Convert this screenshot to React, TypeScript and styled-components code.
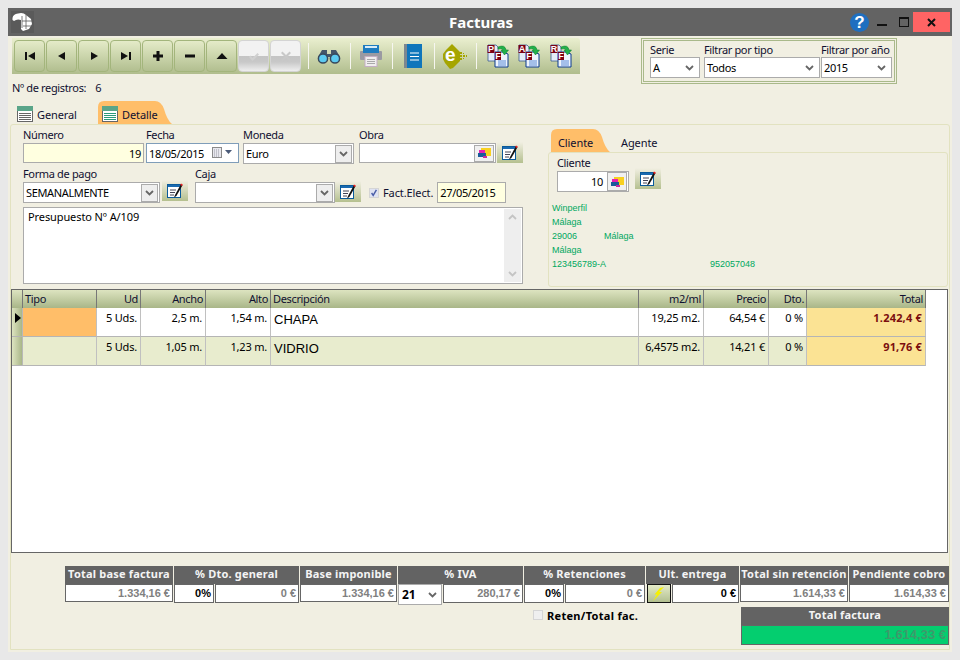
import React from "react";
import styled, { createGlobalStyle } from "styled-components";

const UI = `"Noto Sans", "Liberation Sans", sans-serif`;
const ARIAL = `"Liberation Sans", Arial, sans-serif`;

const Global = createGlobalStyle`
  html, body { margin: 0; padding: 0; background: #e8e8e8; }
  * { box-sizing: border-box; }
  body { font-family: ${UI}; font-size: 11px; color: #000; letter-spacing: -0.35px; }
`;

const Page = styled.div`
  width: 960px; height: 660px; padding: 8px; background: #e8e8e8;
`;
const Win = styled.div`
  width: 944px; height: 644px; background: #f1efe2; display: flex; flex-direction: column;
`;
const TitleBar = styled.div`
  height: 28px; flex: none; background: #636363; display: grid;
  grid-template-columns: 1fr auto 1fr; align-items: center; padding-left: 3px;
`;
const LogoBox = styled.div`
  width: 23px; height: 22px; background: #5a5a5a; display: flex; align-items: center; justify-content: center;
`;
const Title = styled.div`
  color: #fff; font: bold 15px ${UI}; letter-spacing: 0; margin-left: -1px;
`;
const Controls = styled.div`
  display: flex; align-items: center; justify-content: flex-end; height: 100%; padding-right: 2px;
`;
const Help = styled.div`
  width: 19px; height: 19px; border-radius: 50%; background: #1f6fc0; color: #fff; letter-spacing: 0;
  font: bold 17px/19px ${ARIAL}; text-align: center;
`;
const WinBtn = styled.div<{ $w: number; $bg?: string }>`
  width: ${(p) => p.$w}px; height: 20px; display: flex; align-items: center; justify-content: center;
  background: ${(p) => p.$bg || "transparent"};
`;
const Body = styled.div`
  flex: 1; min-height: 0; padding: 2px; display: flex; flex-direction: column;
`;
const TopRow = styled.div`
  height: 63px; flex: none; display: flex; align-items: flex-start; padding-left: 2px;
`;
const TopLeft = styled.div`
  width: 568px; display: flex; flex-direction: column;
`;
const Toolbar = styled.div`
  width: 568px; height: 36px; display: flex; align-items: center; padding-left: 2px;
  background: linear-gradient(#eaefcf, #b0bd8d); border-top-right-radius: 3px;
`;
const NavBtn = styled.div<{ $off?: boolean }>`
  width: 31px; height: 32px; margin-right: 1px; border: 1px solid ${(p) => (p.$off ? "#d4d4d4" : "#a3b57c")};
  border-radius: 4px; display: flex; align-items: center; justify-content: center;
  background: ${(p) =>
    p.$off
      ? "linear-gradient(#f2f2f2 50%, #c4c4c4 50%, #c8c8c8 70%, #eeeeee 100%)"
      : "linear-gradient(#e4ebc8, #b2bf90)"};
`;
const ToolCell = styled.div<{ $w: number; $first?: boolean; $sep?: boolean; $pl?: number }>`
  width: ${(p) => p.$w}px; height: 26px; display: flex; align-items: center; justify-content: center;
  margin-left: ${(p) => (p.$first ? "6px" : "0")};
  padding: 0 ${(p) => (p.$sep && !p.$pl ? "2px" : "0")} 0 ${(p) => p.$pl || 0}px;
  border-left: ${(p) => (p.$sep ? "1px solid #f6f6f0" : "0")};
`;
const Records = styled.div`
  margin-top: 6px; height: 16px; display: flex; line-height: 16px; color: #101030;
`;
const RecordsCount = styled.span`
  margin-left: 9px;
`;
const FilterBox = styled.div`
  margin-left: 61px; width: 256px; height: 46px; border: 3px double #a9b98a;
  padding: 3px 0 0 6px; display: flex;
`;
const Field = styled.div<{ $w?: number; $ml?: number }>`
  display: flex; flex-direction: column; flex: none;
  width: ${(p) => (p.$w ? `${p.$w}px` : "auto")};
  margin-left: ${(p) => p.$ml || 0}px;
`;
const Label = styled.div<{ $h?: number }>`
  height: ${(p) => p.$h || 14}px; line-height: 12px; color: #101030; white-space: nowrap;
`;
const Box = styled.div<{ $h?: number; $bg?: string; $blue?: boolean; $right?: boolean }>`
  height: ${(p) => p.$h || 21}px; background: ${(p) => p.$bg || "#fff"};
  border: 1px solid ${(p) => (p.$blue ? "#7f9db9" : "#ababab")};
  display: flex; align-items: center; justify-content: ${(p) => (p.$right ? "flex-end" : "space-between")};
  padding: ${(p) => (p.$right ? "0 2px 0 0" : "0 1px 0 2px")}; white-space: nowrap; color: #000;
`;
const DateBox = styled(Box)`
  width: 69px;
`;
const ClientBox = styled(Box)`
  padding-right: 1px;
`;
const ClientNumber = styled.span`
  margin-right: 4px;
`;
const SelectArrow = styled.div<{ $boxed?: boolean }>`
  width: 17px; height: 18px; flex: none; display: flex; align-items: center; justify-content: center;
  border: ${(p) => (p.$boxed ? "1px solid #ababab" : "0")}; background: ${(p) => (p.$boxed ? "#eeeeee" : "transparent")};
`;
const EditBtn = styled.div<{ $ml?: number; $mt?: number }>`
  width: 26px; height: 21px; flex: none; display: flex; align-items: center; justify-content: center;
  background: linear-gradient(#f1efe2, #b5c08f);
  margin-left: ${(p) => p.$ml || 0}px; margin-top: ${(p) => p.$mt || 0}px;
`;
const LookupBtn = styled.div<{ $h?: number }>`
  width: 20px; height: ${(p) => p.$h || 17}px; flex: none; background: #f0f0f0; border: 1px solid #ababab;
  display: flex; align-items: center; justify-content: center;
`;
const Tabs = styled.div<{ $h: number; $pl: number }>`
  height: ${(p) => p.$h}px; flex: none; display: flex; align-items: stretch; padding-left: ${(p) => p.$pl}px;
`;
const tabPath = (w: number, h: number) =>
  `path('M0 ${h} V6 Q0 0 6 0 H${w - 17} Q${w - 11} 0 ${w - 8} 8 Q${w - 5} ${h - 4} ${w} ${h} Z')`;
const Tab = styled.div<{ $w: number; $h: number; $on?: boolean; $pl: number; $gap?: number }>`
  width: ${(p) => p.$w}px; display: flex; align-items: center; gap: ${(p) => p.$gap || 4}px;
  padding-left: ${(p) => p.$pl}px; padding-top: 3px; color: #101030; letter-spacing: -0.1px;
  background: ${(p) => (p.$on ? "#ffbe69" : "transparent")};
  clip-path: ${(p) => (p.$on ? tabPath(p.$w, p.$h) : "none")};
`;
const Panel = styled.div`
  flex: 1; min-height: 0; border: 1px solid #e2e2c0; border-radius: 3px 3px 0 0; display: flex; flex-direction: column;
`;
const Upper = styled.div`
  height: 164px; flex: none; display: flex;
`;
const FormArea = styled.div`
  width: 512px; flex: none; padding: 4px 0 0 12px;
`;
const FormRow = styled.div<{ $mt?: number }>`
  display: flex; align-items: flex-start; margin-top: ${(p) => p.$mt || 0}px;
`;
const Check = styled.div<{ $on?: boolean }>`
  width: 10px; height: 10px; flex: none; border: 1px solid #d5d5d5;
  background: ${(p) => (p.$on ? "#dfe3f2" : "#efefef")}; display: flex; align-items: center; justify-content: center;
`;
const CheckRow = styled.div`
  display: flex; align-items: center; height: 21px; margin: 14px 0 0 8px;
`;
const CheckLabel = styled.span`
  margin: 0 4px 0 4px; color: #101030; white-space: nowrap; letter-spacing: -0.1px;
`;
const Memo = styled.div`
  margin-top: 4px; width: 500px; height: 77px; background: #fff; border: 1px solid #ababab;
  display: flex; justify-content: space-between; padding: 1px 1px 1px 4px; line-height: 15px; letter-spacing: -0.1px;
`;
const MemoText = styled.div`
  padding-top: 0;
`;
const Scroll = styled.div`
  width: 17px; background: #eeeeee; display: flex; flex-direction: column; justify-content: space-between;
  align-items: center; padding: 5px 0;
`;
const ClientArea = styled.div`
  margin-left: 25px; width: 400px; padding-top: 4px; display: flex; flex-direction: column;
`;
const ClientPanel = styled.div`
  height: 135px; border: 1px solid #e2e2c0; border-radius: 3px; padding: 4px 0 0 3px;
`;
const ClientTop = styled.div`
  padding-left: 5px; display: flex; align-items: flex-start;
`;
const ClientLines = styled.div`
  margin-top: 9px; font: 9px/14px ${ARIAL}; color: #00a860; letter-spacing: 0;
`;
const ClientLine = styled.div`
  display: flex; height: 14px;
`;
const ClientCell = styled.span<{ $w: number }>`
  width: ${(p) => p.$w}px; flex: none;
`;
const Frame = styled.div`
  margin-right: 1px; height: 264px; flex: none; background: #fff; border: 1px solid #666;
`;
const COLS = "11px 74px 44px 65px 65px 368px 65px 65px 38px 119px";
const HeadRow = styled.div`
  width: 914px; height: 18px; display: grid; grid-template-columns: ${COLS};
  border-bottom: 1px solid #666;
`;
const HeadCell = styled.div<{ $right?: boolean }>`
  background: linear-gradient(#dde4c0, #a9b688); border-right: 1px solid #777;
  text-align: ${(p) => (p.$right ? "right" : "left")}; padding: 0 ${(p) => (p.$right ? "2px" : "0")} 0 ${(p) => (p.$right ? "0" : "2px")};
  line-height: 18px; color: #101030; white-space: nowrap;
`;
const DataRow = styled.div<{ $alt?: boolean }>`
  width: 914px; height: 29px; display: grid; grid-template-columns: ${COLS};
  background: ${(p) => (p.$alt ? "#e8ecce" : "#fff")};
`;
const Indicator = styled.div`
  background: linear-gradient(90deg, #dde4c0, #a9b688); border-right: 1px solid #b8b8b8; border-bottom: 1px solid #b5b5b5;
  padding: 3px 0 0 3px;
`;
const Cell = styled.div<{ $bg?: string; $big?: boolean; $total?: boolean }>`
  background: ${(p) => p.$bg || "transparent"};
  border-right: 1px solid #c0c0c0; border-bottom: 1px solid #b5b5b5;
  text-align: ${(p) => (p.$big ? "left" : "right")};
  padding: ${(p) => (p.$big ? "3px 0 0 3px" : "2px 3px 0 0")};
  font: ${(p) => (p.$big ? `13px/18px ${ARIAL}` : p.$total ? `bold 11px/16px ${UI}` : `11px/16px ${UI}`)};
  letter-spacing: ${(p) => (p.$big ? "0" : p.$total ? "0.2px" : "-0.2px")};
  color: ${(p) => (p.$total ? "#7b0f0f" : "#000")}; white-space: nowrap;
`;
const Totals = styled.div`
  margin: 13px 0 0 54px; display: flex; gap: 1px; align-items: flex-start;
`;
const TotGroup = styled.div<{ $w: number }>`
  width: ${(p) => p.$w}px; flex: none; display: flex; flex-direction: column;
`;
const TotHead = styled.div`
  height: 18px; background: #636363; color: #f4f4f4; font: bold 11px/15px ${UI}; text-align: center; white-space: nowrap;
  letter-spacing: 0.2px;
`;
const TotVals = styled.div<{ $tight?: boolean }>`
  display: flex; gap: ${(p) => (p.$tight ? 0 : 1)}px;
`;
const TotVal = styled.div<{ $w?: number; $strong?: boolean }>`
  height: 19px; background: #fff; border: 1px solid #666; flex: ${(p) => (p.$w ? `0 0 ${p.$w}px` : "1")};
  font: bold 11px/16px ${ARIAL}; text-align: right; padding-right: 2px; letter-spacing: 0;
  color: ${(p) => (p.$strong ? "#000" : "#808080")}; white-space: nowrap;
`;
const IvaSelect = styled.div`
  flex: 0 0 44px; height: 21px; border: 1px solid #ababab; background: #fff; display: flex; align-items: center;
  justify-content: space-between; padding-left: 3px; font: bold 12px ${UI}; color: #000; margin-right: 1px; letter-spacing: 0;
`;
const FlashBtn = styled.div`
  flex: 0 0 24px; height: 19px; border: 1px solid #111; background: linear-gradient(#e4ebc8, #b2bf90);
  display: flex; align-items: center; justify-content: center; margin-left: 1px;
`;
const Lower = styled.div`
  margin-top: 2px; display: flex; align-items: flex-start; padding-left: 522px;
`;
const RetenRow = styled.div`
  display: flex; align-items: center; height: 16px; gap: 4px; width: 208px; flex: none;
  font: bold 11px ${UI}; color: #000; white-space: nowrap; letter-spacing: 0.3px;
`;
const GrandTotal = styled.div`
  width: 208px; flex: none; display: flex; flex-direction: column;
`;
const GrandHead = styled(TotHead)`
  height: 18px;
`;
const GrandVal = styled.div`
  height: 20px; background: #04ce6f; border: 1px solid #666; text-align: right; padding-right: 2px;
  font: bold 13px/18px ${ARIAL}; color: #3d9a6b; letter-spacing: 0;
`;

const Chevron = ({ c = "#666", up = false }: { c?: string; up?: boolean }) => (
  <svg width="9" height="6" viewBox="0 0 9 6">
    <path d={up ? "M1 5 L4.5 1.5 L8 5" : "M1 1 L4.5 4.5 L8 1"} fill="none" stroke={c} strokeWidth="1.8" />
  </svg>
);
const Nav = ({ d, fill = "#111" }: { d: string; fill?: string }) => (
  <svg width="12" height="12" viewBox="0 0 12 12"><path d={d} fill={fill} /></svg>
);
const Logo = () => (
  <svg width="21" height="20" viewBox="0 0 21 20">
    <path d="M0.5 6 Q1 2 6 1.500 Q11 0 14 3 L19 7 L20 12 L17 17 L11 19 L9 17 L9 8 Q5 6.500 2 9 L0.5 8 Z" fill="#fff" />
    <path d="M10 4 V16 M14 3 V17 M10 9 L20 9 M11 14 L19 14" stroke="#5a5a5a" strokeWidth=".8" />
  </svg>
);
const Binoculars = () => (
  <svg width="24" height="15" viewBox="0 0 24 15">
    <path d="M5 1 H10 V5 H14 V1 H19 L23 8 H1 Z" fill="#44556a" />
    <circle cx="6" cy="9.500" r="4.600" fill="#5ccaf0" stroke="#37485c" strokeWidth="1.500" />
    <circle cx="18" cy="9.500" r="4.600" fill="#5ccaf0" stroke="#37485c" strokeWidth="1.500" />
  </svg>
);
const Printer = () => (
  <svg width="22" height="22" viewBox="0 0 22 22">
    <rect x="0" y="6" width="22" height="9" rx="1" fill="#9a9aa2" />
    <path d="M3 0 H19 V8 H3 Z" fill="#1e7cc0" />
    <rect x="5" y="1" width="12" height="2" fill="#d8ecf8" />
    <rect x="5" y="11.500" width="12" height="10" fill="#f0eeee" stroke="#c4aec4" />
    <path d="M7 14.500 H15 M7 16.500 H15 M7 18.500 H15" stroke="#aaa" />
  </svg>
);
const Book = () => (
  <svg width="18" height="24" viewBox="0 0 18 24">
    <rect width="18" height="24" fill="#0f76bb" />
    <rect width="3" height="24" fill="#7c8790" />
    <path d="M6 9 H15 M6 12.500 H15 M6 16 H15" stroke="#fff" strokeWidth="1.200" />
  </svg>
);
const EIcon = () => (
  <svg width="24" height="25" viewBox="0 0 24 25">
    <path d="M9 0 L14 5 L17 8 V17 L10 24 L7 25 L2 19 L0 15 V10 L3 6 Z" fill="#a5a500" />
    <text x="7" y="17" textAnchor="middle" fontFamily={ARIAL} fontWeight="bold" fontSize="19" fill="#fff">e</text>
    <path d="M17 8h2v2h-2z M20 9h1v1h-1z M17 11h2v2h-2z M20 11h2v2h-2z M23 11h1v2h-1z M17 14h2v2h-2z M20 14h1v1h-1z" fill="#a5a500" />
  </svg>
);
const DocIcon = ({ letter }: { letter: string }) => (
  <svg width="22" height="24" viewBox="0 0 22 24">
    <path d="M1 1 H9 L11 3 V17 H1 Z" fill="#e4ecf8" stroke="#3a5a90" strokeWidth=".8" />
    <rect x="0.500" y="1" width="7" height="8" fill="#7b0014" />
    <text x="4" y="8" textAnchor="middle" fontFamily={ARIAL} fontWeight="bold" fontSize="9" fill="#fff" letterSpacing="0">{letter}</text>
    <path d="M8 8 H16 L21 10 V23 H8 Z" fill="#eef4fc" stroke="#0a3a90" strokeWidth="1" />
    <path d="M11 17 H19 M11 19 H19 M11 21 H19" stroke="#5a8ad8" />
    <rect x="8" y="8" width="6" height="8" fill="#7b0014" />
    <text x="11" y="15" textAnchor="middle" fontFamily={ARIAL} fontWeight="bold" fontSize="9" fill="#fff" letterSpacing="0">F</text>
    <path d="M11 3 Q18 0 19 6 L21.500 6 L17.500 11 L14 6 L16 6 Q15 4 11 5 Z" fill="#22b04a" stroke="#0d7a2a" strokeWidth=".5" />
  </svg>
);
const EditIcon = () => (
  <svg width="16" height="16" viewBox="0 0 16 16">
    <rect x="0.500" y="1.500" width="13" height="13" fill="#fff" stroke="#0a5a9a" />
    <rect x="1" y="2" width="12" height="2" fill="#1a6ab0" />
    <path d="M3 7 H9 M3 9.500 H8 M3 12 H7" stroke="#445" />
    <path d="M14 1 L8 12 L7 14.500 L9.400 13 L15.500 2.200 Z" fill="#111" />
    <path d="M14 .5 L15.800 1.600 L15 3 L13.200 2 Z" fill="#e22" />
  </svg>
);
const FolderIcon = () => (
  <svg width="13" height="10" viewBox="0 0 13 10">
    <rect x="3" y="0" width="10" height="8" fill="#f8d020" />
    <rect x="1" y="2" width="6" height="4" fill="#e820b0" />
    <rect x="0" y="5" width="8" height="4" fill="#1a5a9a" />
    <rect x="5" y="8" width="4" height="2" fill="#c82aa0" />
  </svg>
);
const Calendar = () => (
  <svg width="25" height="12" viewBox="0 0 25 12">
    <rect x="0.500" y="0.500" width="9" height="10" fill="#e8e8ee" stroke="#8a8a8a" />
    <path d="M2 3h6M2 5h6M2 7h6M2 9h6" stroke="#9a9aa6" strokeDasharray="1 1" />
    <path d="M13 3 H20 L16.500 7 Z" fill="#4a5a78" />
  </svg>
);
const TabIcon = ({ green = false }: { green?: boolean }) => (
  <svg width="16" height="16" viewBox="0 0 16 16">
    <rect x="0.500" y="0.500" width="15" height="15" fill="#fff" stroke="#666" />
    <rect width="16" height="5" fill="#5aa589" />
    <path d="M2 7.500 H14 M2 9.500 H14 M2 11.500 H14 M2 13.500 H14" stroke={green ? "#2a9a78" : "#666"} />
  </svg>
);
const Bolt = () => (
  <svg width="14" height="14" viewBox="0 0 14 14">
    <path d="M12 0 L7 5 L10 5 L1 14 L5 7.500 L2.500 7.500 L8 1 Z" fill="#f6f000" />
  </svg>
);
const CheckMark = () => (
  <svg width="10" height="10" viewBox="0 0 10 10">
    <path d="M2 5 L4 8 L8 1" fill="none" stroke="#4a5ea8" strokeWidth="1.800" />
  </svg>
);

const SelectBox = ({ value, boxed, h }: { value?: string; boxed?: boolean; h?: number }) => (
  <Box $h={h}>
    <span>{value}</span>
    <SelectArrow $boxed={boxed}><Chevron /></SelectArrow>
  </Box>
);

const rows = [
  { ud: "5 Uds.", an: "2,5 m.", al: "1,54 m.", d: "CHAPA", m: "19,25 m2.", p: "64,54 €", t: "1.242,4 €" },
  { ud: "5 Uds.", an: "1,05 m.", al: "1,23 m.", d: "VIDRIO", m: "6,4575 m2.", p: "14,21 €", t: "91,76 €" },
];

export default function App() {
  return (
    <Page>
      <Global />
      <Win>
        <TitleBar>
          <LogoBox><Logo /></LogoBox>
          <Title>Facturas</Title>
          <Controls>
            <Help>?</Help>
            <WinBtn $w={26}><svg width="10" height="10" viewBox="0 0 10 10"><rect y="7" width="10" height="2" fill="#111" /></svg></WinBtn>
            <WinBtn $w={18}><svg width="10" height="10" viewBox="0 0 10 10"><rect x=".5" y=".5" width="9" height="9" fill="none" stroke="#111" /><rect width="10" height="2" fill="#111" /></svg></WinBtn>
            <WinBtn $w={37} $bg="#ff6464"><svg width="9" height="9" viewBox="0 0 9 9"><path d="M1 1 L8 8 M8 1 L1 8" stroke="#111" strokeWidth="2" /></svg></WinBtn>
          </Controls>
        </TitleBar>
        <Body>
          <TopRow>
            <TopLeft>
              <Toolbar>
                <NavBtn><Nav d="M1 2h2v8H1z M11 2v8L4 6z" /></NavBtn>
                <NavBtn><Nav d="M9 2v8L2 6z" /></NavBtn>
                <NavBtn><Nav d="M3 2v8l7-4z" /></NavBtn>
                <NavBtn><Nav d="M1 2v8l7-4z M9 2h2v8H9z" /></NavBtn>
                <NavBtn><Nav d="M4.500 1h3v3.500h3.500v3H7.500V11h-3V7.500H1v-3h3.500z" /></NavBtn>
                <NavBtn><Nav d="M1 4.500h10v3H1z" /></NavBtn>
                <NavBtn><Nav d="M6 3l5.500 6H.5z" /></NavBtn>
                <NavBtn $off><Nav d="M1 7l1.500-1.500L4.500 8l5-5L11 4.500 4.500 11z" fill="#d0d0d0" /></NavBtn>
                <NavBtn $off><Nav d="M1 3l1.500-1.500L6 5l3.500-3.500L11 3 7.500 6.500 11 10l-1.500 1.500L6 8l-3.500 3.500L1 10l3.500-3.500z" fill="#c8c8c8" /></NavBtn>
                <ToolCell $w={42} $first $sep><Binoculars /></ToolCell>
                <ToolCell $w={42} $sep><Printer /></ToolCell>
                <ToolCell $w={42} $sep><Book /></ToolCell>
                <ToolCell $w={42} $sep><EIcon /></ToolCell>
                <ToolCell $w={37} $sep $pl={5}><DocIcon letter="P" /></ToolCell>
                <ToolCell $w={32}><DocIcon letter="A" /></ToolCell>
                <ToolCell $w={32}><DocIcon letter="R" /></ToolCell>
              </Toolbar>
              <Records>Nº de registros:<RecordsCount>6</RecordsCount></Records>
            </TopLeft>
            <FilterBox>
              <Field $w={50}><Label $h={13}>Serie</Label><SelectBox value="A" /></Field>
              <Field $w={116} $ml={4}><Label $h={13}>Filtrar por tipo</Label><SelectBox value="Todos" /></Field>
              <Field $w={71} $ml={1}><Label $h={13}>Filtrar por año</Label><SelectBox value="2015" /></Field>
            </FilterBox>
          </TopRow>
          <Tabs $h={23} $pl={5}>
            <Tab $w={83} $h={23} $pl={2}><TabIcon />General</Tab>
            <Tab $w={74} $h={23} $pl={4} $on><TabIcon green />Detalle</Tab>
          </Tabs>
          <Panel>
            <Upper>
              <FormArea>
                <FormRow>
                  <Field $w={121}><Label>Número</Label><Box $h={20} $bg="#ffffe0" $right>19</Box></Field>
                  <Field $w={93} $ml={2}><Label>Fecha</Label><Box $h={20} $blue>18/05/2015<Calendar /></Box></Field>
                  <Field $w={111} $ml={4}><Label>Moneda</Label><SelectBox value="Euro" boxed /></Field>
                  <Field $w={137} $ml={5}><Label>Obra</Label><Box $h={20}><span /><LookupBtn><FolderIcon /></LookupBtn></Box></Field>
                  <EditBtn $ml={1} $mt={13}><EditIcon /></EditBtn>
                </FormRow>
                <FormRow $mt={4}>
                  <Field $w={137}><Label>Forma de pago</Label><SelectBox value="SEMANALMENTE" boxed /></Field>
                  <EditBtn $ml={2} $mt={12}><EditIcon /></EditBtn>
                  <Field $w={140} $ml={7}><Label>Caja</Label><SelectBox boxed /></Field>
                  <EditBtn $mt={13}><EditIcon /></EditBtn>
                  <CheckRow>
                    <Check $on><CheckMark /></Check>
                    <CheckLabel>Fact.Elect.</CheckLabel>
                    <DateBox $bg="#ffffe0">27/05/2015</DateBox>
                  </CheckRow>
                </FormRow>
                <Memo>
                  <MemoText>Presupuesto Nº A/109</MemoText>
                  <Scroll><Chevron c="#c4c4c4" up /><Chevron c="#c4c4c4" /></Scroll>
                </Memo>
              </FormArea>
              <ClientArea>
                <Tabs $h={23} $pl={3}>
                  <Tab $w={59} $h={23} $pl={7} $on>Cliente</Tab>
                  <Tab $w={60} $h={23} $pl={11}>Agente</Tab>
                </Tabs>
                <ClientPanel>
                  <ClientTop>
                    <Field $w={72}><Label>Cliente</Label>
                      <ClientBox $right><ClientNumber>10</ClientNumber><LookupBtn $h={19}><FolderIcon /></LookupBtn></ClientBox>
                    </Field>
                    <EditBtn $ml={6} $mt={11}><EditIcon /></EditBtn>
                  </ClientTop>
                  <ClientLines>
                    <ClientLine>Winperfil</ClientLine>
                    <ClientLine>Málaga</ClientLine>
                    <ClientLine><ClientCell $w={52}>29006</ClientCell>Málaga</ClientLine>
                    <ClientLine>Málaga</ClientLine>
                    <ClientLine><ClientCell $w={158}>123456789-A</ClientCell>952057048</ClientLine>
                  </ClientLines>
                </ClientPanel>
              </ClientArea>
            </Upper>
            <Frame>
              <HeadRow>
                <HeadCell />
                <HeadCell>Tipo</HeadCell>
                <HeadCell $right>Ud</HeadCell>
                <HeadCell $right>Ancho</HeadCell>
                <HeadCell $right>Alto</HeadCell>
                <HeadCell>Descripción</HeadCell>
                <HeadCell $right>m2/ml</HeadCell>
                <HeadCell $right>Precio</HeadCell>
                <HeadCell $right>Dto.</HeadCell>
                <HeadCell $right>Total</HeadCell>
              </HeadRow>
              {rows.map((r, i) => (
                <DataRow key={r.d} $alt={i === 1}>
                  <Indicator>
                    {i === 0 && <svg width="6" height="10" viewBox="0 0 6 10"><path d="M0 0 L6 5 L0 10 Z" fill="#000" /></svg>}
                  </Indicator>
                  <Cell $bg={i === 0 ? "#ffbe69" : undefined} />
                  <Cell>{r.ud}</Cell>
                  <Cell>{r.an}</Cell>
                  <Cell>{r.al}</Cell>
                  <Cell $big>{r.d}</Cell>
                  <Cell>{r.m}</Cell>
                  <Cell>{r.p}</Cell>
                  <Cell>0 %</Cell>
                  <Cell $bg="#fbe394" $total>{r.t}</Cell>
                </DataRow>
              ))}
            </Frame>
            <Totals>
              <TotGroup $w={108}><TotHead>Total base factura</TotHead><TotVal>1.334,16 €</TotVal></TotGroup>
              <TotGroup $w={125}><TotHead>% Dto. general</TotHead><TotVals><TotVal $w={40} $strong>0%</TotVal><TotVal>0 €</TotVal></TotVals></TotGroup>
              <TotGroup $w={97}><TotHead>Base imponible</TotHead><TotVal>1.334,16 €</TotVal></TotGroup>
              <TotGroup $w={125}><TotHead>% IVA</TotHead><TotVals $tight><IvaSelect>21<SelectArrow><Chevron /></SelectArrow></IvaSelect><TotVal>280,17 €</TotVal></TotVals></TotGroup>
              <TotGroup $w={121}><TotHead>% Retenciones</TotHead><TotVals><TotVal $w={40} $strong>0%</TotVal><TotVal>0 €</TotVal></TotVals></TotGroup>
              <TotGroup $w={93}><TotHead>Ult. entrega</TotHead><TotVals><FlashBtn><Bolt /></FlashBtn><TotVal $strong>0 €</TotVal></TotVals></TotGroup>
              <TotGroup $w={108}><TotHead>Total sin retención</TotHead><TotVal>1.614,33 €</TotVal></TotGroup>
              <TotGroup $w={100}><TotHead>Pendiente cobro</TotHead><TotVal>1.614,33 €</TotVal></TotGroup>
            </Totals>
            <Lower>
              <RetenRow><Check />Reten/Total fac.</RetenRow>
              <GrandTotal>
                <GrandHead>Total factura</GrandHead>
                <GrandVal>1.614,33 €</GrandVal>
              </GrandTotal>
            </Lower>
          </Panel>
        </Body>
      </Win>
    </Page>
  );
}
